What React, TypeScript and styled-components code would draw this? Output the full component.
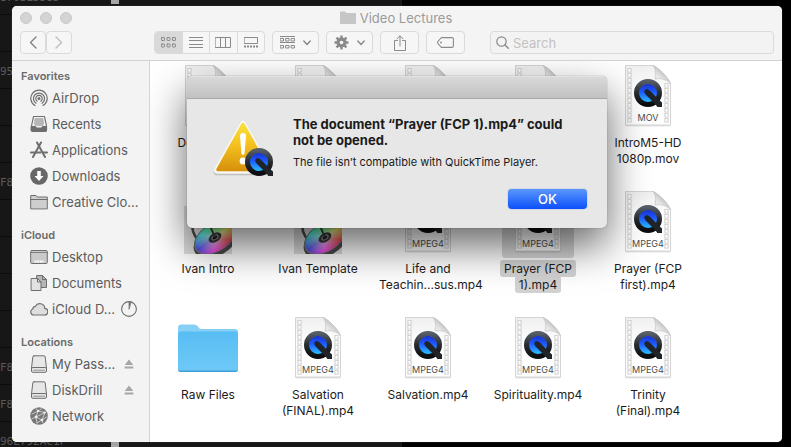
import React from "react";
import styled, { createGlobalStyle, css } from "styled-components";

const GlobalStyle = createGlobalStyle`
  *, *::before, *::after { box-sizing: border-box; }
  html, body { margin: 0; padding: 0; background: #000; }
  body {
    font-family: Inter, "Liberation Sans", sans-serif;
    font-size: 13px;
    -webkit-font-smoothing: antialiased;
  }
  button, input { font: inherit; color: inherit; }
  button { padding: 0; border: 0; background: none; cursor: default; }
  h1, h2, p, ul { margin: 0; padding: 0; }
  ul { list-style: none; }
  svg { display: block; flex: none; }
`;

/* ---------- desktop and the log behind the window ---------- */

const Desktop = styled.div`
  display: grid;
  min-height: 100vh;
  overflow: hidden;
  background: #000;
  & > * { grid-area: 1 / 1; }
`;

const Backdrop = styled.div`
  width: 402px;
  max-width: 52vw;
  height: 100vh;
  overflow: hidden;
  background: #171717;
  display: flex;
  flex-direction: column;
  justify-content: flex-end;
`;

const LogRow = styled.div`
  flex: none;
  display: flex;
  align-items: center;
  height: 37px;
  padding-top: 4px;
  border-bottom: 1px solid #0b0b0b;
  font: 11px/16px "DejaVu Sans Mono", monospace;
  color: #5a5a5a;
  &:last-child { margin-bottom: -12px; }
`;

const LogText = styled.span`
  width: 111px;
  overflow: hidden;
  white-space: nowrap;
`;

const LogMark = styled.span`
  width: 8px;
  height: 12px;
  background: #a5a5a5;
`;

/* ---------- window ---------- */

const WindowSlot = styled.div`
  display: flex;
  padding: 6px 9px 5px 12px;
  z-index: 1;
`;

const Window = styled.main`
  position: relative;
  flex: 1;
  min-width: 0;
  display: flex;
  flex-direction: column;
  border-radius: 5px;
  overflow: hidden;
  background: #fff;
  box-shadow: 0 0 1px #777;
`;

const Header = styled.header`
  flex: none;
  height: 55px;
  padding: 1px 8px 0;
  background: #f4f4f4;
  border-bottom: 1px solid #d2d2d2;
`;

const TitleRow = styled.div`
  display: grid;
  grid-template-columns: 1fr auto 1fr;
  align-items: center;
  height: 21px;
  margin-bottom: 3px;
`;

const Lights = styled.div`
  display: flex;
  gap: 8px;
`;

const Light = styled.button`
  width: 12px;
  height: 12px;
  border-radius: 50%;
  background: #d3d3d3;
  border: 1px solid #c9c9c9;
`;

const WindowTitle = styled.h1`
  display: flex;
  align-items: center;
  gap: 4px;
  padding-right: 2px;
  font-size: 13px;
  line-height: 18px;
  font-weight: 400;
  color: #9b9b9b;
`;

const Toolbar = styled.div`
  display: flex;
  align-items: center;
  gap: 7px;
  height: 23px;
`;

const frame = css`
  height: 23px;
  border: 1px solid #dadada;
  border-radius: 4px;
  background: #f6f6f6;
`;

const NavGroup = styled.div`
  display: flex;
  margin-right: 75px;
`;

const ToolButton = styled.button<{ $w: number }>`
  ${frame}
  width: ${(p) => p.$w}px;
  display: flex;
  align-items: center;
  justify-content: center;
  gap: 8px;
`;

const ViewGroup = styled.div`
  ${frame}
  display: flex;
  width: 111px;
  overflow: hidden;
`;

const ViewButton = styled.button<{ $on?: boolean }>`
  flex: 1;
  display: flex;
  align-items: center;
  justify-content: center;
  background: ${(p) => (p.$on ? "#d9d9d9" : "transparent")};
  & + & { border-left: 1px solid #dadada; }
`;

const SearchField = styled.label`
  ${frame}
  flex: 1;
  min-width: 0;
  margin-left: 18px;
  display: flex;
  align-items: center;
  gap: 4px;
  padding: 0 5px;
  background: #f3f3f3;
`;

const SearchInput = styled.input`
  flex: 1;
  min-width: 0;
  padding: 0;
  border: 0;
  outline: 0;
  background: none;
  font-size: 13px;
  &::placeholder { color: #c2c2c2; opacity: 1; }
`;

const Content = styled.div`
  flex: 1;
  display: flex;
  min-height: 0;
`;

/* ---------- sidebar ---------- */

const Sidebar = styled.nav`
  flex: none;
  width: 138px;
  padding: 6px 0 0 9px;
  background: #f3f3f3;
  border-right: 1px solid #d4d4d4;
`;

const Section = styled.section`
  margin-bottom: 11px;
`;

const SectionTitle = styled.h2`
  font-size: 11px;
  line-height: 18px;
  font-weight: 600;
  color: #6a6a6a;
`;

const Place = styled.li`
  display: flex;
  align-items: center;
  height: 26px;
  padding: 0 12px 0 9px;
`;

const PlaceLink = styled.a`
  flex: 1;
  min-width: 0;
  display: flex;
  align-items: center;
  gap: 4px;
  color: #5c5c5c;
  text-decoration: none;
  font-size: 13px;
  line-height: 18px;
`;

const PlaceName = styled.span`
  white-space: nowrap;
`;

const PlaceAction = styled.button`
  display: flex;
  width: 16px;
  justify-content: center;
`;

/* ---------- files ---------- */

const Files = styled.ul`
  flex: 1;
  min-width: 0;
  display: grid;
  grid-template-columns: repeat(auto-fill, 110px);
  grid-auto-rows: 126px;
  padding-left: 3px;
  background: #fff;
`;

const FileItem = styled.li`
  display: flex;
  flex-direction: column;
  align-items: center;
`;

const FileIcon = styled.div<{ $selected?: boolean }>`
  display: flex;
  justify-content: center;
  width: 72px;
  height: 71px;
  padding-top: 4px;
  margin-bottom: 3px;
  border-radius: 3px;
  background: ${(p) => (p.$selected ? "#d8d8d8" : "transparent")};
`;

const FileLabel = styled.div`
  width: 106px;
  text-align: center;
  font-size: 12px;
  line-height: 16px;
  color: #1c1c1c;
`;

const FileName = styled.span<{ $selected?: boolean }>`
  padding: 1px 4px;
  border-radius: 3px;
  box-decoration-break: clone;
  -webkit-box-decoration-break: clone;
  background: ${(p) => (p.$selected ? "#d2d2d2" : "transparent")};
`;

/* ---------- alert ---------- */

const AlertLayer = styled.div`
  position: absolute;
  inset: 0;
  display: flex;
  justify-content: center;
  align-items: flex-start;
  padding-top: 70px;
  clip-path: inset(55px 0 0 138px);
`;

const Alert = styled.div`
  width: 420px;
  border-radius: 5px;
  background: #e7e7e7;
  box-shadow: 0 0 1px rgba(0, 0, 0, 0.6), 0 18px 42px rgba(0, 0, 0, 0.6);
  overflow: hidden;
`;

const AlertBar = styled.div`
  height: 23px;
  background: linear-gradient(#d9d9d9, #c1c1c1);
  border-top: 1px solid #e2e2e2;
  border-bottom: 1px solid #a9a9a9;
`;

const AlertBody = styled.div`
  display: grid;
  grid-template-columns: 64px 1fr;
  column-gap: 17px;
  padding: 17px 20px 19px 25px;
`;

const AlertText = styled.div`
  max-width: 284px;
  color: #1a1a1a;
`;

const AlertTitle = styled.h2`
  font-size: 13px;
  line-height: 16px;
  font-weight: 700;
  margin-bottom: 6px;
`;

const AlertDetail = styled.p`
  font-size: 11px;
  line-height: 16px;
`;

const OkButton = styled.button`
  grid-column: 2;
  justify-self: end;
  width: 79px;
  height: 20px;
  margin-top: 9px;
  border-radius: 4px;
  background: linear-gradient(#5b97fb, #0c50fb);
  box-shadow: 0 0 1px #1550c8;
  color: #fff;
  font-size: 13px;
  line-height: 20px;
  font-weight: 500;
`;

/* ---------- drawings ---------- */

const SharedDefs = styled.svg`
  position: absolute;
  width: 0;
  height: 0;
`;

const Gradients = () => (
  <SharedDefs aria-hidden="true">
    <defs>
      <linearGradient id="ring" x1="0" y1="0" x2="0" y2="1">
        <stop offset="0" stopColor="#555d66" />
        <stop offset="0.5" stopColor="#272b30" />
        <stop offset="1" stopColor="#0c0c0e" />
      </linearGradient>
      <linearGradient id="lens" x1="0" y1="0" x2="0" y2="1">
        <stop offset="0" stopColor="#1a2fd0" />
        <stop offset="0.45" stopColor="#1d5bff" />
        <stop offset="1" stopColor="#2cc4ff" />
      </linearGradient>
      <linearGradient id="page" x1="0" y1="0" x2="0" y2="1">
        <stop offset="0" stopColor="#efefef" />
        <stop offset="0.4" stopColor="#fdfdfd" />
        <stop offset="1" stopColor="#ffffff" />
      </linearGradient>
      <linearGradient id="curl" x1="0" y1="1" x2="0.6" y2="0.3">
        <stop offset="0" stopColor="#ffffff" />
        <stop offset="0.6" stopColor="#e3e3e3" />
        <stop offset="1" stopColor="#bdbdbd" />
      </linearGradient>
      <linearGradient id="folder" x1="0" y1="0" x2="0" y2="1">
        <stop offset="0" stopColor="#58bdf3" />
        <stop offset="1" stopColor="#6fc9f7" />
      </linearGradient>
      <linearGradient id="warn" x1="0" y1="0" x2="0" y2="1">
        <stop offset="0" stopColor="#fbe03a" />
        <stop offset="0.5" stopColor="#f2bd1d" />
        <stop offset="1" stopColor="#d8930c" />
      </linearGradient>
      <radialGradient id="glow">
        <stop offset="0" stopColor="#fff" stopOpacity="0.7" />
        <stop offset="1" stopColor="#fff" stopOpacity="0" />
      </radialGradient>
    </defs>
  </SharedDefs>
);

const QMark = () => (
  <g>
    <circle cx="0" cy="0" r="9.6" fill="url(#lens)" />
    <circle cx="0" cy="0" r="11.5" fill="none" stroke="url(#ring)" strokeWidth="5" />
    <path d="M-2.6-3.4C-1-4.4.6-3.6 2-2.2L10.6 6.6 14 9.4V14H9.4L7.6 11.6-2.4 1.4C-4-.4-4.2-2.2-2.6-3.4Z" fill="#202327" />
  </g>
);

const holes = [3, 8, 13, 18, 23, 28, 33, 38, 43, 48, 53];

const MovieDoc = ({ kind }: { kind?: string }) => (
  <svg width="48" height="62" viewBox="0 0 48 62" aria-hidden="true">
    <path d="M1.5.5H29C33 1.5 45 13 46.5 19V60.5H1.5Z" fill="#000" opacity="0.1" transform="translate(0 1)" />
    <path d="M1.5.5H29C33 1.5 45 13 46.5 19V60H1.5Z" fill="url(#page)" stroke="#cacaca" strokeWidth="0.8" />
    <path d="M3.4 3V58M7.6 3V58M40.4 18V58M44.6 20V58" stroke="#e2e2e2" strokeWidth="0.6" />
    {holes.map((y) => (
      <rect key={y} x="4" y={y + 0.5} width="3" height="3.6" fill="#fff" stroke="#cbcbcb" strokeWidth="0.8" />
    ))}
    {holes.slice(3).map((y) => (
      <rect key={y} x="41" y={y + 0.5} width="3" height="3.6" fill="#fff" stroke="#cbcbcb" strokeWidth="0.8" />
    ))}
    <path d="M29 .5C32 4 32 9 31 14 36 13 43 14 46.5 19 45 13 34 2 29 .5Z" fill="url(#curl)" stroke="#c4c4c4" strokeWidth="0.7" />
    <g transform="translate(24 28)"><QMark /></g>
    {kind && (
      <text x="24" y="56" textAnchor="middle" fontFamily="Inter, sans-serif" fontSize="9" fill="#4c4c4c">{kind}</text>
    )}
  </svg>
);

const FolderArt = () => (
  <svg width="62" height="62" viewBox="0 0 62 62" aria-hidden="true">
    <path d="M1 11Q1 7.500 4 7.500H17Q19 7.500 20.500 9L23 12H58Q61 12 61 15V24H1Z" fill="#86d0f6" />
    <path d="M1 17Q1 14.500 3.500 14.500H58.500Q61 14.500 61 17V52Q61 55 58 55H4Q1 55 1 52Z" fill="url(#folder)" />
    <path d="M1 51.500V52Q1 55 4 55H58Q61 55 61 52V51.500Q61 53.500 58 53.500H4Q1 53.500 1 51.500Z" fill="#3fa0d8" />
  </svg>
);

const wedges = Array.from({ length: 36 }, (_, i) => {
  const a = (i * Math.PI) / 18;
  const b = ((i + 1.2) * Math.PI) / 18;
  return {
    d: `M0 0L${24 * Math.cos(a)} ${24 * Math.sin(a)}L${24 * Math.cos(b)} ${24 * Math.sin(b)}Z`,
    fill: `hsl(${(390 - i * 10) % 360} 80% 60%)`,
  };
});

const MotionArt = () => (
  <svg width="48" height="63" viewBox="0 0 48 63" aria-hidden="true">
    <defs>
      <clipPath id="tile"><rect x="0" y="15" width="48" height="48" /></clipPath>
    </defs>
    <rect x="0" y="15" width="48" height="48" fill="#dcdcdc" />
    <g clipPath="url(#tile)">
      <path d="M9 30C7 38 9 44 15 50" fill="none" stroke="#4b4b4b" strokeWidth="2.5" />
      <g transform="translate(31 46.5) rotate(-32) scale(1 .62)">
        <circle r="25" cy="4" fill="#4a4a4c" />
        <circle r="23" fill="#77777a" />
        <g transform="scale(.9) rotate(20)">
          {wedges.map((w) => <path key={w.d} d={w.d} fill={w.fill} />)}
        </g>
        <circle r="21.6" fill="url(#glow)" />
        <circle r="7" fill="#3a3a3c" />
        <circle r="4" fill="#8e8e90" />
        <circle r="2.6" fill="#1c1c1e" />
      </g>
      <path d="M31 46L25 33" stroke="#3a3a3c" strokeWidth="1.8" />
    </g>
  </svg>
);

const WarningArt = () => (
  <svg width="64" height="64" viewBox="0 0 64 64" aria-hidden="true">
    <path d="M31 7L5 55H57Z" fill="#999" stroke="#999" strokeWidth="7" strokeLinejoin="round" opacity="0.5" transform="translate(0 .8)" />
    <path d="M31 7.500L5 54.500H57Z" fill="#fff" stroke="#f8f6f0" strokeWidth="6.5" strokeLinejoin="round" />
    <path d="M31 8.500L6 53.500H56Z" fill="url(#warn)" stroke="url(#warn)" strokeWidth="3.5" strokeLinejoin="round" />
    <path d="M28 20Q28 17 31 17T34 20L32.600 37Q32.300 39 31 39T29.400 37Z" fill="#fff" />
    <circle cx="31" cy="45" r="3.4" fill="#fff" />
    <g transform="translate(47 46)"><QMark /></g>
  </svg>
);

const Icon = ({ children, w = 18, h = 18 }: { children: React.ReactNode; w?: number; h?: number }) => (
  <svg width={w} height={h} viewBox={`0 0 ${w} ${h}`} fill="none" stroke="#6e6e6e" strokeLinecap="round" strokeLinejoin="round" aria-hidden="true">
    {children}
  </svg>
);

const AirDropIcon = () => (
  <Icon>
    <circle cx="9" cy="9.5" r="1.5" fill="#6e6e6e" stroke="none" />
    <path strokeWidth="1.2" d="M7.200 12.200A3.200 3.200 0 1 1 10.800 12.200M6 14.200A5.500 5.500 0 1 1 12 14.200M5 16.500A8.200 8.200 0 1 1 13 16.500" />
  </Icon>
);
const RecentsIcon = () => (
  <Icon>
    <path d="M3.500 1.500H14.500L16.500 11V15Q16.500 16.500 15 16.500H3Q1.500 16.500 1.500 15V11Z" fill="#f3f3f3" strokeWidth="1.2" />
    <path d="M1.500 11.500H5.500L6.500 13H11.500L12.500 11.500H16.500V16H1.500Z" fill="#6e6e6e" />
    <path d="M5 4H13M4.600 6H13.400M4.400 8H13.600M5 10H13" strokeWidth="0.9" />
  </Icon>
);
const AppsIcon = () => (
  <Icon>
    <path d="M7 1.500L15 16M11 1.500L3 16" strokeWidth="2" />
    <path d="M1 11.500H10.500M13 11.500H17" strokeWidth="2" />
  </Icon>
);
const DownloadsIcon = () => (
  <Icon>
    <circle cx="9" cy="9" r="8.8" fill="#686868" stroke="none" />
    <path d="M7.200 4H10.800V9H13.500L9 14 4.500 9H7.200Z" fill="#fff" stroke="none" />
  </Icon>
);
const SideFolderIcon = () => (
  <Icon>
    <path d="M.7 15.500V2.500H6L7.200 4H17.300V15.500Z" fill="#cecece" />
    <path d="M.7 6.500H17.300" />
  </Icon>
);
const DesktopIcon = () => (
  <Icon>
    <rect x=".7" y="2.5" width="16.6" height="13" rx="1" fill="#c9c9c9" />
    <path d="M.7 4.500H17.300" strokeWidth="0.8" />
    <path d="M4.500 13.500H13.500" stroke="#fff" strokeWidth="2" strokeDasharray="2 .6" strokeLinecap="butt" />
  </Icon>
);
const DocumentsIcon = () => (
  <Icon>
    <path d="M7 1.500H12.500L16.500 5.500V13.500H7Z" fill="#b5b5b5" />
    <path d="M12.500 1.500V5.500H16.500" />
    <path d="M1.500 4.500H7.500L11 8V16.500H1.500Z" fill="#e2e2e2" />
    <path d="M7.500 4.500V8H11" />
  </Icon>
);
const CloudIcon = () => (
  <Icon>
    <path d="M4 15H14.200A3.300 3.300 0 0 0 14.800 8.400 5 5 0 0 0 5.400 6.300 2.800 2.800 0 0 0 2.800 9 3.100 3.100 0 0 0 4 15Z" fill="#dedede" strokeWidth="1.2" />
  </Icon>
);
const DiskIcon = () => (
  <Icon>
    <path d="M4 .8H14Q15 .8 15.200 2L16.500 13V16Q16.500 17.300 15 17.300H3Q1.500 17.300 1.500 16V13L2.800 2Q3 .8 4 .8Z" fill="#e6e6e6" />
    <path d="M1.500 13.500Q2 12.500 3 12.500H15Q16 12.500 16.500 13.500" />
    <path d="M3.500 15.200H14.500" strokeWidth="0.7" />
  </Icon>
);
const NetworkIcon = () => (
  <Icon>
    <circle cx="9" cy="9" r="8.8" fill="#777" stroke="none" />
    <g stroke="#ddd" strokeWidth="0.8">
      <path d="M2 7L8 4 15 5.500M8 4L6 10 12 13 15 5.500M6 10L1.500 12M6 10L15 5.500M6 10L7 16M12 13L7 16M12 13L16.500 10M8 4L6 1.500M8 4L12 1.500M12 13L13 16" />
    </g>
    <g fill="#eee" stroke="none">
      <circle cx="8" cy="4" r="1.2" /><circle cx="6" cy="10" r="1.4" /><circle cx="12" cy="13" r="1.3" /><circle cx="14.6" cy="5.6" r="1.2" />
    </g>
  </Icon>
);
const EjectIcon = () => (
  <Icon w={10} h={10}>
    <path d="M5 .5L9.300 6H.7ZM.7 7.600H9.300V9.400H.7Z" fill="#a6a6a6" stroke="none" />
  </Icon>
);
const ProgressIcon = () => (
  <Icon w={16} h={16}>
    <circle cx="8" cy="8" r="7.4" strokeWidth="1.1" />
    <path d="M8 8V.8A7 7 0 0 1 9.800 1.100Z" fill="#6e6e6e" strokeWidth="0.7" />
  </Icon>
);

const tool = "#8a8a8a";
const Chevron = ({ left, faint }: { left?: boolean; faint?: boolean }) => (
  <Icon w={8} h={13}>
    <path d={left ? "M7 1L1.500 6.500 7 12" : "M1 1L6.500 6.500 1 12"} stroke={faint ? "#bdbdbd" : "#808080"} strokeWidth="1.4" />
  </Icon>
);
const DownChevron = () => (
  <Icon w={8} h={6}><path d="M.8 1L4 4.500 7.200 1" stroke={tool} strokeWidth="1.4" /></Icon>
);
const GridIcon = () => (
  <Icon w={15} h={11}>
    {[0, 1, 2].map((c) => [0, 1].map((r) => (
      <rect key={`${c}${r}`} x={c * 5.5 + 0.5} y={r * 6.5 + 0.5} width="3" height="3" rx="0.5" stroke={tool} />
    )))}
  </Icon>
);
const ListIcon = () => (
  <Icon w={14} h={11}><path d="M0 .5H14M0 3.500H14M0 7.500H14M0 10.500H14" stroke={tool} strokeLinecap="butt" /></Icon>
);
const ColumnsIcon = () => (
  <Icon w={16} h={11}><path d="M.5.5H15.500V10.500H.5ZM5.500.5V10.500M10.500.5V10.500" stroke={tool} /></Icon>
);
const GalleryIcon = () => (
  <Icon w={14} h={11}>
    <path d="M.5.5H13.500V6.500H.5Z" stroke={tool} />
    <path d="M0 9.500H14" stroke={tool} strokeWidth="2" strokeDasharray="2 1" strokeLinecap="butt" />
  </Icon>
);
const ArrangeIcon = () => (
  <Icon w={15} h={13}>
    <path d="M0 .5H15M0 6.500H15" stroke={tool} strokeLinecap="butt" />
    {[0, 1, 2].map((c) => [0, 1].map((r) => (
      <rect key={`${c}${r}`} x={c * 5.5 + 0.5} y={r * 7 + 2.5} width="3" height="2.5" stroke={tool} />
    )))}
  </Icon>
);
const GearIcon = () => (
  <Icon w={15} h={15}>
    <g stroke={tool} strokeWidth="2.4" strokeLinecap="butt">
      {[0, 45, 90, 135].map((a) => <path key={a} d="M7.500 .5V14.500" transform={`rotate(${a} 7.5 7.5)`} />)}
    </g>
    <circle cx="7.5" cy="7.5" r="5" fill={tool} stroke="none" />
    <circle cx="7.5" cy="7.5" r="1.8" fill="#f6f6f6" stroke="none" />
  </Icon>
);
const ShareIcon = () => (
  <Icon w={12} h={16}>
    <path d="M3.500 5.500H.5V15.500H11.500V5.500H8.500M6 11V1M3 3.800L6 .8 9 3.800" stroke={tool} />
  </Icon>
);
const TagIcon = () => (
  <Icon w={17} h={11}>
    <path d="M5 .6H15Q16.400.6 16.400 2V9Q16.400 10.400 15 10.400H5Q4.400 10.400 4 10L.8 6.300Q.4 5.500.8 4.700L4 1Q4.400.6 5 .6Z" stroke={tool} strokeWidth="1.1" />
    <circle cx="4" cy="5.5" r="0.9" fill={tool} stroke="none" />
  </Icon>
);
const SearchIcon = () => (
  <Icon w={13} h={13}>
    <circle cx="5.5" cy="5.5" r="4.7" stroke={tool} strokeWidth="1.2" />
    <path d="M9 9L12.300 12.300" stroke={tool} strokeWidth="1.4" />
  </Icon>
);
const TitleFolder = () => (
  <Icon w={16} h={13}>
    <path d="M0 1.500Q0 .5 1 .5H5L6.500 2H15Q16 2 16 3V12Q16 13 15 13H1Q0 13 0 12Z" fill="#c6c6c6" stroke="none" />
  </Icon>
);

/* ---------- data ---------- */

type PlaceData = { name: string; icon: React.ReactNode; action?: "eject" | "progress" };

const sections: { title: string; places: PlaceData[] }[] = [
  {
    title: "Favorites",
    places: [
      { name: "AirDrop", icon: <AirDropIcon /> },
      { name: "Recents", icon: <RecentsIcon /> },
      { name: "Applications", icon: <AppsIcon /> },
      { name: "Downloads", icon: <DownloadsIcon /> },
      { name: "Creative Clo...", icon: <SideFolderIcon /> },
    ],
  },
  {
    title: "iCloud",
    places: [
      { name: "Desktop", icon: <DesktopIcon /> },
      { name: "Documents", icon: <DocumentsIcon /> },
      { name: "iCloud D...", icon: <CloudIcon />, action: "progress" },
    ],
  },
  {
    title: "Locations",
    places: [
      { name: "My Pass...", icon: <DiskIcon />, action: "eject" },
      { name: "DiskDrill", icon: <DiskIcon />, action: "eject" },
      { name: "Network", icon: <NetworkIcon /> },
    ],
  },
];

type FileData = { name?: string; kind?: "MOV" | "MPEG4" | "motion" | "folder"; selected?: boolean };

const files: FileData[] = [
  { name: "Demo.mov" },
  {},
  {},
  {},
  { name: "IntroM5-HD 1080p.mov", kind: "MOV" },
  { name: "Ivan Intro", kind: "motion" },
  { name: "Ivan Template", kind: "motion" },
  { name: "Life and Teachin...sus.mp4", kind: "MPEG4" },
  { name: "Prayer (FCP 1).mp4", kind: "MPEG4", selected: true },
  { name: "Prayer (FCP first).mp4", kind: "MPEG4" },
  { name: "Raw Files", kind: "folder" },
  { name: "Salvation (FINAL).mp4", kind: "MPEG4" },
  { name: "Salvation.mp4", kind: "MPEG4" },
  { name: "Spirituality.mp4", kind: "MPEG4" },
  { name: "Trinity (Final).mp4", kind: "MPEG4" },
];

const logRows: { text?: string; mark?: boolean }[] = [
  { text: "870BE5D8D", mark: true },
  {},
  { text: "955" },
  {},
  {},
  { text: "F87" },
  {},
  {},
  {},
  {},
  { text: "F87" },
  { text: "F87" },
  { text: "96E792AC1F", mark: true },
];

const fileArt = (kind: FileData["kind"]) =>
  kind === "folder" ? <FolderArt /> : kind === "motion" ? <MotionArt /> : <MovieDoc kind={kind} />;

export default function App() {
  return (
    <>
      <GlobalStyle />
      <Gradients />
      <Desktop>
        <Backdrop aria-hidden="true">
          {logRows.map((row, i) => (
            <LogRow key={i}>
              <LogText>{row.text}</LogText>
              {row.mark && <LogMark />}
            </LogRow>
          ))}
        </Backdrop>
        <WindowSlot>
          <Window>
            <Header>
              <TitleRow>
                <Lights>
                  <Light aria-label="Close" />
                  <Light aria-label="Minimize" />
                  <Light aria-label="Zoom" />
                </Lights>
                <WindowTitle><TitleFolder />Video Lectures</WindowTitle>
              </TitleRow>
              <Toolbar>
                <NavGroup>
                  <ToolButton $w={26} aria-label="Back"><Chevron left /></ToolButton>
                  <ToolButton $w={26} aria-label="Forward"><Chevron faint /></ToolButton>
                </NavGroup>
                <ViewGroup>
                  <ViewButton $on aria-label="Icons"><GridIcon /></ViewButton>
                  <ViewButton aria-label="List"><ListIcon /></ViewButton>
                  <ViewButton aria-label="Columns"><ColumnsIcon /></ViewButton>
                  <ViewButton aria-label="Gallery"><GalleryIcon /></ViewButton>
                </ViewGroup>
                <ToolButton $w={47} aria-label="Group"><ArrangeIcon /><DownChevron /></ToolButton>
                <ToolButton $w={47} aria-label="Actions"><GearIcon /><DownChevron /></ToolButton>
                <ToolButton $w={39} aria-label="Share"><ShareIcon /></ToolButton>
                <ToolButton $w={39} aria-label="Tags"><TagIcon /></ToolButton>
                <SearchField>
                  <SearchIcon />
                  <SearchInput type="search" placeholder="Search" aria-label="Search" />
                </SearchField>
              </Toolbar>
            </Header>
            <Content>
              <Sidebar aria-label="Places">
                {sections.map((s) => (
                  <Section key={s.title}>
                    <SectionTitle>{s.title}</SectionTitle>
                    <ul>
                      {s.places.map((p) => (
                        <Place key={p.name}>
                          <PlaceLink href="#">{p.icon}<PlaceName>{p.name}</PlaceName></PlaceLink>
                          {p.action && (
                            <PlaceAction aria-label={p.action === "eject" ? "Eject" : "Progress"}>
                              {p.action === "eject" ? <EjectIcon /> : <ProgressIcon />}
                            </PlaceAction>
                          )}
                        </Place>
                      ))}
                    </ul>
                  </Section>
                ))}
              </Sidebar>
              <Files>
                {files.map((f, i) => (
                  <FileItem key={i}>
                    <FileIcon $selected={f.selected}>{fileArt(f.kind)}</FileIcon>
                    {f.name && <FileLabel><FileName $selected={f.selected}>{f.name}</FileName></FileLabel>}
                  </FileItem>
                ))}
              </Files>
            </Content>
            <AlertLayer>
              <Alert role="alertdialog" aria-labelledby="alert-title" aria-describedby="alert-detail">
                <AlertBar />
                <AlertBody>
                  <WarningArt />
                  <AlertText>
                    <AlertTitle id="alert-title">The document “Prayer (FCP 1).mp4” could not be opened.</AlertTitle>
                    <AlertDetail id="alert-detail">The file isn’t compatible with QuickTime Player.</AlertDetail>
                  </AlertText>
                  <OkButton>OK</OkButton>
                </AlertBody>
              </Alert>
            </AlertLayer>
          </Window>
        </WindowSlot>
      </Desktop>
    </>
  );
}
